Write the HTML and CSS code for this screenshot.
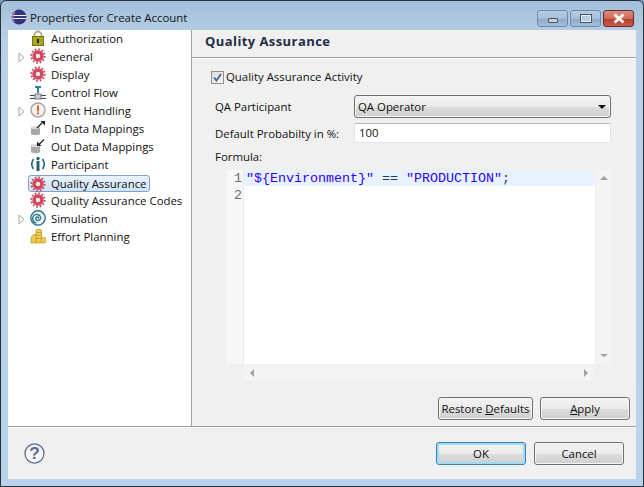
FILE: index.html
```html
<!DOCTYPE html>
<html lang="en">
<head>
<meta charset="utf-8">
<title>Properties for Create Account</title>
<link rel="stylesheet" href="styles.css">
</head>
<body>
<svg class="defs" width="0" height="0" aria-hidden="true">
  <defs>
    <g id="gear">
      <circle cx="8" cy="8" r="5.700" fill="#cf4a60"/>
      <circle cx="8" cy="8" r="6.680" fill="none" stroke="#cf4a60" stroke-width="2" stroke-dasharray="1.750 1.750"/>
      <circle cx="8" cy="8" r="2.200" fill="#f8e6e8"/>
    </g>
    <polygon id="tw" points="1,1 6,5.500 1,10" fill="#fff" stroke="#a6a6a6"/>
  </defs>
</svg>
<div class="window">
  <header class="titlebar">
    <svg class="logo" width="16" height="16" viewBox="0 0 16 16"><circle cx="8" cy="8" r="7.500" fill="#34347e"/><path d="M.5 6.500h15M.5 9.500h15" stroke="#f2f2f8" stroke-width="1.200"/><path d="M1 5A7.500 7.500 0 0 1 5 1L2.500 8 4 14 1 11z" fill="#b58fb0" opacity=".7"/></svg>
    <span class="title">Properties for Create Account</span>
    <div class="controls">
      <span class="ctl"><i class="glyph-min"></i></span>
      <span class="ctl"><i class="glyph-max"></i></span>
      <span class="ctl ctl-close"><svg width="14" height="11" viewBox="0 0 14 11"><path d="M2.500 1.500l9 8M11.500 1.500l-9 8" stroke="#fff" stroke-width="3"/></svg></span>
    </div>
  </header>
  <div class="client">
    <div class="main">
      <nav class="tree">
        <div class="row"><span class="tw"></span>
          <svg class="ic" viewBox="0 0 16 16"><path d="M4.500 7V5a3.500 3.500 0 0 1 7 0v2" fill="none" stroke="#a9a98a" stroke-width="1.800"/><rect x="2.500" y="6.500" width="11" height="9" fill="#a8a81e" stroke="#77771a"/><rect x="7" y="9" width="2" height="4" fill="#222"/></svg>
          <span class="label">Authorization</span></div>
        <div class="row"><svg class="tw" viewBox="0 0 7 11"><use href="#tw"/></svg><svg class="ic" viewBox="0 0 16 16"><use href="#gear"/></svg><span class="label">General</span></div>
        <div class="row"><span class="tw"></span><svg class="ic" viewBox="0 0 16 16"><use href="#gear"/></svg><span class="label">Display</span></div>
        <div class="row"><span class="tw"></span>
          <svg class="ic" viewBox="0 0 16 16"><path d="M5 2h6v2H9v5H7V4H5z" fill="#2f8196"/><path d="M0 11.500h16M0 14.500h16" stroke="#444"/><rect x="5" y="10" width="6" height="5" fill="#c8d0d4" stroke="#778"/></svg>
          <span class="label">Control Flow</span></div>
        <div class="row"><svg class="tw" viewBox="0 0 7 11"><use href="#tw"/></svg>
          <svg class="ic" viewBox="0 0 16 16"><circle cx="8" cy="8" r="7" fill="#f4f2ee" stroke="#aaa69e" stroke-width="1.500"/><rect x="7" y="3.500" width="2" height="6" fill="#d9602c"/><rect x="7" y="10.500" width="2" height="2" fill="#d9602c"/></svg>
          <span class="label">Event Handling</span></div>
        <div class="row"><span class="tw"></span>
          <svg class="ic" viewBox="0 0 16 16"><path d="M1 7.500c0-1.500 9-1.500 9 0V14c0 1.500-9 1.500-9 0z" fill="#a8a8a8"/><ellipse cx="5.500" cy="7.500" rx="4.500" ry="1.500" fill="#dcdcdc"/><path d="M7 8l6-6" stroke="#222" stroke-width="1.200"/><path d="M10.500 1H15v4.500z" fill="#222"/></svg>
          <span class="label">In Data Mappings</span></div>
        <div class="row"><span class="tw"></span>
          <svg class="ic" viewBox="0 0 16 16"><path d="M1 7.500c0-1.500 9-1.500 9 0V14c0 1.500-9 1.500-9 0z" fill="#a8a8a8"/><ellipse cx="5.500" cy="7.500" rx="4.500" ry="1.500" fill="#dcdcdc"/><path d="M14 1.500L9 6.500" stroke="#222" stroke-width="1.200"/><path d="M7 3.500V8h4.500z" fill="#222"/></svg>
          <span class="label">Out Data Mappings</span></div>
        <div class="row"><span class="tw"></span>
          <svg class="ic" viewBox="0 0 16 16"><circle cx="8" cy="2.500" r="1.700" fill="#1f5f7a"/><path d="M6.500 5h3v10h-3z" fill="#1f5f7a"/><path d="M3.500 3C1 7 1 10 3.500 13M12.500 3c2.500 4 2.500 7 0 10" fill="none" stroke="#1f5f7a" stroke-width="1.500"/></svg>
          <span class="label">Participant</span></div>
        <div class="row row-sel"><svg class="ic" viewBox="0 0 16 16"><use href="#gear"/></svg><span class="label">Quality Assurance</span></div>
        <div class="row"><span class="tw"></span><svg class="ic" viewBox="0 0 16 16"><use href="#gear"/></svg><span class="label">Quality Assurance Codes</span></div>
        <div class="row"><svg class="tw" viewBox="0 0 7 11"><use href="#tw"/></svg>
          <svg class="ic" viewBox="0 0 16 16"><circle cx="8" cy="8" r="7.200" fill="#eaf4f6" stroke="#2f7488" stroke-width="1.400"/><path d="M8 8.500c1-.8 0-2-1.200-1.500-1.500.6-1.300 3 .5 3.500 2.500.6 4-2 3-4-1-2.300-5-3-6.800-.6-1.800 2.600-.6 6.500 3 7" fill="none" stroke="#2f7488" stroke-width="1.400"/></svg>
          <span class="label">Simulation</span></div>
        <div class="row"><span class="tw"></span>
          <svg class="ic" viewBox="0 0 16 16"><path d="M1 9.500l2.500-3h3v8.500H1z" fill="#f0c850" stroke="#b59028" stroke-width=".7"/><rect x="6" y="1.500" width="5.500" height="13.500" rx="1.500" fill="#f2cc4c" stroke="#b59028" stroke-width=".7"/><path d="M6 4.500h5.500M6 7.500h5.500M6 10.500h5.500" stroke="#b59028" stroke-width=".7"/><rect x="11" y="9.500" width="5" height="5.500" rx="1.500" fill="#f2cc4c" stroke="#b59028" stroke-width=".7"/></svg>
          <span class="label">Effort Planning</span></div>
      </nav>
      <section class="page">
        <h1 class="page-title">Quality Assurance</h1>
        <div class="page-body">
          <label class="check-row">
            <span class="checkbox"><svg width="9" height="9" viewBox="0 0 9 9"><path d="M1 4.500l2.500 3L8 1" fill="none" stroke="#4a5f96" stroke-width="1.800"/></svg></span>
            <span class="label">Quality Assurance Activity</span>
          </label>
          <div class="field field-combo">
            <span class="field-label">QA Participant</span>
            <div class="combo"><span>QA Operator</span><i class="combo-arrow"></i></div>
          </div>
          <div class="field field-text">
            <span class="field-label">Default Probabilty in %:</span>
            <div class="input">100</div>
          </div>
          <div class="formula-label">Formula:</div>
          <div class="editor">
            <div class="editor-top">
              <div class="gutter"><div>1</div><div>2</div></div>
              <div class="code">
                <div class="code-line code-active"><span class="str">"${Environment}"</span> == <span class="str">"PRODUCTION"</span>;</div>
                <div class="code-line"></div>
              </div>
              <div class="vbar"><i class="arr-up"></i><i class="arr-down"></i></div>
            </div>
            <div class="hbar"><i class="arr-left"></i><i class="arr-right"></i></div>
          </div>
          <div class="page-buttons">
            <button class="btn btn-restore">Restore <u>D</u>efaults</button>
            <button class="btn btn-apply"><u>A</u>pply</button>
          </div>
        </div>
      </section>
    </div>
    <footer class="footer">
      <svg class="help" width="21" height="21" viewBox="0 0 22 22"><circle cx="11" cy="11" r="10" fill="#f4f4f6" stroke="#5a6c90" stroke-width="1.300"/><text x="11" y="17" text-anchor="middle" class="help-q">?</text></svg>
      <div class="footer-buttons">
        <button class="btn btn-dlg btn-default">OK</button>
        <button class="btn btn-dlg">Cancel</button>
      </div>
    </footer>
  </div>
</div>
</body>
</html>
```
FILE: styles.css
```css
* { box-sizing: border-box; }
html, body { margin: 0; padding: 0; }
body { width: 644px; height: 487px; overflow: hidden; background: #7fa0b8; font-family: "Open Sans", "Liberation Sans", sans-serif; font-size: 11.4px; color: #111; }
.defs { position: absolute; }
.window { width: 644px; height: 487px; display: flex; flex-direction: column; padding: 0 7px 7px; border: 1px solid #26343c; border-radius: 6px 6px 0 0; background: linear-gradient(#a3bfd9 0, #b9d1e8 40px, #b9d3ec 100%); }
.titlebar { height: 29px; flex: none; display: flex; align-items: center; margin: 0 2px 0 3px; }
.logo { flex: none; margin-top: 2px; }
.title { margin: 3px 0 0 3px; color: #101820; flex: 1; }
.controls { display: flex; align-items: flex-start; gap: 2px; height: 100%; padding-top: 9px; }
.ctl { width: 31px; height: 17px; border: 1px solid #6f8aa6; border-radius: 3px; display: flex; align-items: center; justify-content: center; background: linear-gradient(#b6cde2 0, #a5bfd8 50%, #8aa8c6 51%, #a5c0da 100%); }
.ctl-close { background: linear-gradient(#dd8a7c 0, #cf6a5a 50%, #b8392a 51%, #c85a4a 100%); border-color: #6b2a2a; }
.glyph-min { width: 10px; height: 5px; margin-top: 4px; background: #c8d2dc; border: 1px solid #44546a; border-radius: 1px; }
.glyph-max { width: 12px; height: 9px; background: #b8cde0; border: 2px solid #e8eef4; outline: 1px solid #44546a; outline-offset: -1px; }
.client { flex: 1; min-height: 0; display: flex; flex-direction: column; background: #f0f0f0; }
.main { height: 397px; flex: none; display: flex; border-bottom: 1px solid #a0a0a0; box-shadow: 0 1px 0 #fff; }
.tree { width: 184px; flex: none; background: #fff; border-right: 1px solid #a0a0a0; }
.row { height: 18px; display: flex; align-items: center; color: #111; }
.tw { width: 7px; height: 11px; margin: 0 5px 0 10px; flex: none; }
.ic { width: 16px; height: 16px; flex: none; margin: 0 5px 2px 0; }
.label { white-space: nowrap; padding-bottom: 2px; }
.row-sel { height: 17px; margin: 1px 0 0 20px; padding-left: 1px; width: 122px; border: 1px solid #7da2ce; border-radius: 3px; background: linear-gradient(#eaf3fd, #cfe3f9); }
.row-sel .ic { margin-bottom: 0; }
.row-sel .label { padding-bottom: 1px; }
.page { flex: 1; min-width: 0; display: flex; flex-direction: column; }
.page-title { height: 28px; margin: 0; padding: 2px 0 0 13px; font-size: 13px; letter-spacing: .42px; font-weight: 700; color: #1f2f45; border-bottom: 1px solid #a0a0a0; box-shadow: 0 1px 0 #fff; line-height: 18px; flex: none; }
.page-body { flex: 1; min-height: 0; display: flex; flex-direction: column; padding: 13px 6px 0 19px; }
.check-row { display: flex; align-items: center; gap: 2px; height: 13px; }
.checkbox { width: 13px; height: 13px; border: 1px solid #8e8f8f; background: linear-gradient(135deg, #dcdcdc, #f6f6f6); display: flex; align-items: center; justify-content: center; }
.field { display: flex; align-items: center; }
.field-label { width: 143px; padding-left: 4px; flex: none; }
.field-combo { margin-top: 11px; }
.field-text { margin-top: 5px; }
.combo { width: 257px; height: 23px; border: 1px solid #707070; border-radius: 3px; background: linear-gradient(#f2f2f2 0, #ebebeb 50%, #dddddd 51%, #cfcfcf 100%); display: flex; align-items: center; justify-content: space-between; padding: 0 4px 0 3px; box-shadow: inset 0 0 0 1px #f6f6f6; }
.combo-arrow { width: 0; height: 0; border-left: 4px solid transparent; border-right: 4px solid transparent; border-top: 4px solid #111; }
.input { width: 257px; height: 20px; background: #fff; border: 1px solid #e2e3ea; border-top-color: #b5b5b5; border-radius: 2px; padding-left: 4px; line-height: 18px; }
.formula-label { margin: 6px 0 0 4px; height: 16px; line-height: 16px; }
.editor { margin: 5px 0 0 16px; width: 383px; display: flex; flex-direction: column; }
.editor-top { height: 194px; display: flex; }
.gutter { width: 17px; background: #f7f7f7; flex: none; text-align: right; padding: 0 1px 0 0; color: #6e6e6e; font-family: "Liberation Mono", monospace; font-size: 13.33px; line-height: 17px; border-right: 1px solid #ececec; }
.code { flex: 1; background: #fff; font-family: "Liberation Mono", monospace; font-size: 13.33px; line-height: 17px; min-width: 0; }
.code-line { height: 17px; white-space: pre; padding-left: 2px; color: #2a3a55; }
.code-active { height: 16px; margin-bottom: 1px; background: #e8f2fe; }
.str { color: #2a00ff; }
.vbar { width: 14px; flex: none; margin-left: 1px; background: #f4f4f4; position: relative; }
.hbar { height: 15px; width: 349px; background: #f4f4f4; position: relative; margin: 1px 0 0 17px; }
.arr-up, .arr-down, .arr-left, .arr-right { position: absolute; width: 0; height: 0; }
.arr-up { left: 4px; top: 6px; border: 4px solid transparent; border-top: 0; border-bottom: 4px solid #a0a0a0; }
.arr-down { left: 4px; bottom: 7px; border: 4px solid transparent; border-bottom: 0; border-top: 3px solid #a0a0a0; }
.arr-left { left: 6px; top: 4px; border: 4px solid transparent; border-left: 0; border-right: 4px solid #a0a0a0; }
.arr-right { right: 5px; top: 4px; border: 4px solid transparent; border-right: 0; border-left: 4px solid #a0a0a0; }
.page-buttons { margin-top: 17px; display: flex; justify-content: flex-end; gap: 7px; }
.btn { height: 23px; border: 1px solid #707070; border-radius: 3px; background: linear-gradient(#f2f2f2 0, #ebebeb 50%, #dddddd 51%, #cfcfcf 100%); box-shadow: inset 0 0 0 1px #f6f6f6; font: inherit; color: #111; padding: 0; }
.btn-restore { width: 95px; }
.btn-apply { width: 90px; }
.footer { flex: 1; display: flex; align-items: center; justify-content: space-between; padding: 0 12px 0 16px; }
.help { flex: none; }
.help-q { font: 700 18px "Liberation Sans", sans-serif; fill: #5a6c90; }
.footer-buttons { display: flex; gap: 8px; margin-top: 1px; }
.btn-dlg { width: 90px; }
.btn-default { border-color: #3c7fb1; box-shadow: inset 0 0 0 2px #9fdcf4; }
```
